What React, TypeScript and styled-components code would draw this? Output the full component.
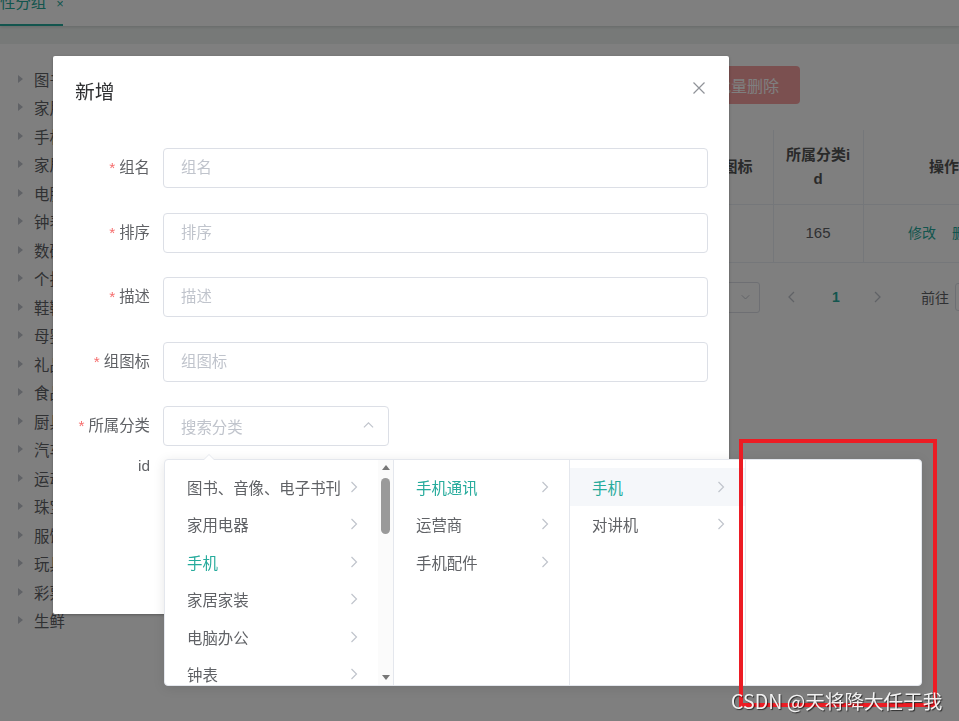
import React from "react";
import styled, { createGlobalStyle } from "styled-components";

const TEAL = "#26ab9c";
const FONT = `"Liberation Sans", "Noto Sans CJK SC", sans-serif`;

const GlobalStyle = createGlobalStyle`
  html, body {
    margin: 0;
    padding: 0;
    width: 959px;
    height: 721px;
    overflow: hidden;
    background: #fff;
    font-family: ${FONT};
  }
  * {
    box-sizing: border-box;
  }
`;

const Page = styled.div`
  width: 959px;
  height: 721px;
  overflow: hidden;
  display: flex;
  flex-direction: column;
  background: #fff;
`;

const TabBar = styled.div`
  height: 26px;
  flex-shrink: 0;
  display: flex;
  background: #fff;
  box-shadow: 0 1px 3px rgba(0, 0, 0, 0.14);
  position: relative;
  z-index: 1;
`;

const Tab = styled.div`
  width: 63px;
  height: 26px;
  border-bottom: 2px solid ${TEAL};
  color: ${TEAL};
  font-size: 15.4px;
  line-height: 16px;
  display: flex;
  align-items: flex-start;
  gap: 10px;
  overflow: hidden;
  white-space: nowrap;

  span {
    margin-top: -5px;
  }
`;

const TabClose = styled.span`
  font-size: 13px;
  margin-top: -4px !important;
`;

const Band = styled.div`
  height: 18px;
  flex-shrink: 0;
  background: #eef3f1;
`;

const Content = styled.div`
  flex: 1;
  display: flex;
  background: #fff;
`;

const Sidebar = styled.div`
  width: 240px;
  flex-shrink: 0;
  padding-top: 20.5px;
`;

const TreeNode = styled.div`
  height: 28.5px;
  display: flex;
  align-items: center;
  padding-left: 18px;
  font-size: 15.4px;
  color: #606266;
  white-space: nowrap;
`;

const Caret = styled.i`
  width: 0;
  height: 0;
  border-top: 4px solid transparent;
  border-bottom: 4px solid transparent;
  border-left: 5px solid #c0c4cc;
  margin-right: 11px;
`;

const Main = styled.div`
  width: 785px;
  flex-shrink: 0;
  padding-top: 22px;
`;

const Toolbar = styled.div`
  width: 560px;
  height: 38px;
  display: flex;
  justify-content: flex-end;
  gap: 10px;
  margin-bottom: 26px;
`;

const SearchBox = styled.div`
  width: 220px;
  height: 38px;
  border: 1px solid #dcdfe6;
  border-radius: 4px;
`;

const Button = styled.div<{ $kind?: "primary" | "danger" }>`
  height: 38px;
  padding: 0 21px;
  border-radius: 4px;
  display: flex;
  align-items: center;
  font-size: 16px;
  color: #fff;
  background: ${(p) => (p.$kind === "danger" ? "#f7a1a1" : TEAL)};
`;

const Table = styled.table`
  border-collapse: collapse;
  table-layout: fixed;
  width: 785px;
  font-size: 15px;
  color: #606266;

  th,
  td {
    border-bottom: 1px solid #ebeef5;
    border-right: 1px solid #ebeef5;
    text-align: center;
    line-height: 24px;
    padding: 0 12px;
    word-break: break-all;
  }

  th {
    height: 74px;
    font-weight: bold;
    color: #555;
  }

  td {
    height: 58px;
  }
`;

const LinkBtn = styled.span`
  color: ${TEAL};
  font-size: 14px;
  margin: 0 8px;
`;

const Pagination = styled.div`
  margin-top: 19px;
  margin-left: 364px;
  height: 31px;
  display: flex;
  align-items: center;
  font-size: 14px;
  color: #606266;
`;

const Total = styled.span`
  width: 46px;
  margin-right: 10px;
  white-space: nowrap;
`;

const SizeSelect = styled.div`
  width: 100px;
  height: 31px;
  border: 1px solid #dcdfe6;
  border-radius: 3px;
  display: flex;
  align-items: center;
  justify-content: space-between;
  padding: 0 9px 0 10px;
  margin-right: 18px;
  white-space: nowrap;
`;

const PageBtn = styled.div<{ $active?: boolean }>`
  width: ${(p) => (p.$active ? 36 : 30)}px;
  height: 28px;
  display: flex;
  align-items: center;
  justify-content: center;
  font-weight: bold;
  color: ${(p) => (p.$active ? TEAL : "#c0c4cc")};
`;

const JumpInput = styled.div`
  width: 50px;
  height: 28px;
  border: 1px solid #dcdfe6;
  border-radius: 3px;
  margin-left: 6px;
`;

const Mask = styled.div`
  position: fixed;
  inset: 0;
  z-index: 10;
  background: rgba(0, 0, 0, 0.5);
`;

const Dialog = styled.div`
  position: absolute;
  z-index: 11;
  left: 53px;
  top: 56px;
  width: 676px;
  height: 558px;
  background: #fff;
  border-radius: 2px;
  box-shadow: 0 1px 3px rgba(0, 0, 0, 0.3);
  display: flex;
  flex-direction: column;
`;

const DialogHeader = styled.div`
  padding: 23px 20px 10px 22px;
  position: relative;
`;

const DialogTitle = styled.span`
  font-size: 19.8px;
  line-height: 26px;
  color: #303133;
`;

const CloseBtn = styled.svg`
  position: absolute;
  right: 24px;
  top: 26px;
`;

const DialogBody = styled.div`
  padding: 33px 21px 0 20px;
`;

const FormItem = styled.div`
  display: flex;
  margin-bottom: 24.5px;
`;

const Label = styled.label`
  width: 90px;
  flex-shrink: 0;
  padding-right: 13px;
  text-align: right;
  line-height: 40px;
  font-size: 15.4px;
  color: #606266;
  white-space: nowrap;
`;

const Star = styled.span`
  color: #f56c6c;
  margin-right: 4px;
`;

const Input = styled.input`
  flex: 1;
  height: 40px;
  border: 1px solid #dcdfe6;
  border-radius: 4px;
  padding: 0 17px;
  font-family: ${FONT};
  font-size: 15.4px;
  color: #606266;
  outline: none;

  &::placeholder {
    color: #c0c4cc;
  }
`;

const CascaderBox = styled.div`
  width: 226px;
  height: 40px;
  border: 1px solid #dcdfe6;
  border-radius: 4px;
  padding: 0 14px 0 17px;
  display: flex;
  align-items: center;
  justify-content: space-between;
  font-size: 15.4px;
  color: #c0c4cc;
`;

const DialogFooter = styled.div`
  margin-top: auto;
  padding: 10px 20px 20px;
  display: flex;
  justify-content: flex-end;
  gap: 12px;
`;

const Dropdown = styled.div`
  position: absolute;
  z-index: 12;
  left: 164px;
  top: 459px;
  width: 758px;
  height: 227px;
  background: #fff;
  border: 1px solid #e4e7ed;
  border-radius: 4px;
  box-shadow: 0 2px 12px rgba(0, 0, 0, 0.1);
  display: flex;
`;

const PopperArrow = styled.div`
  position: absolute;
  top: -6px;
  left: 38px;
  width: 0;
  height: 0;
  border-left: 6px solid transparent;
  border-right: 6px solid transparent;
  border-bottom: 6px solid #e4e7ed;

  &::after {
    content: "";
    position: absolute;
    left: -5px;
    top: 1px;
    border-left: 5px solid transparent;
    border-right: 5px solid transparent;
    border-bottom: 5px solid #fff;
  }
`;

const Menu = styled.div<{ $width: number; $last?: boolean; $scroll?: boolean }>`
  width: ${(p) => p.$width}px;
  flex-shrink: 0;
  height: 100%;
  position: relative;
  overflow: hidden;
  border-right: ${(p) => (p.$last ? "none" : "1px solid #e4e7ed")};
  padding: 8px ${(p) => (p.$scroll ? 15 : 0)}px 0 0;
`;

const Node = styled.div<{ $active?: boolean; $hover?: boolean }>`
  height: 37.5px;
  display: flex;
  align-items: center;
  justify-content: space-between;
  padding: 0 20px 0 22px;
  font-size: 15.4px;
  white-space: nowrap;
  color: ${(p) => (p.$active ? TEAL : "#606266")};
  background: ${(p) => (p.$hover ? "#f5f7fa" : "transparent")};
`;

const Scrollbar = styled.div`
  position: absolute;
  top: 0;
  right: 0;
  bottom: 0;
  width: 15px;
  background: #fbfbfb;
  display: flex;
  flex-direction: column;
  align-items: center;
  padding: 5px 0;
`;

const ScrollArrow = styled.i<{ $down?: boolean }>`
  width: 0;
  height: 0;
  border-left: 4px solid transparent;
  border-right: 4px solid transparent;
  ${(p) =>
    p.$down
      ? "border-top: 5px solid #777; margin-top: auto;"
      : "border-bottom: 5px solid #777;"}
`;

const Thumb = styled.div`
  width: 9px;
  height: 56px;
  margin-top: 8px;
  border-radius: 5px;
  background: #9a9a9a;
`;

const Watermark = styled.div`
  position: absolute;
  z-index: 13;
  left: 731px;
  top: 688px;
  font-family: "Noto Sans CJK SC", sans-serif;
  font-size: 19.6px;
  line-height: 26px;
  color: rgba(255, 255, 255, 0.92);
  text-shadow: 1px 1px 1px rgba(0, 0, 0, 0.65);
  white-space: nowrap;
`;

const RedFrame = styled.div`
  position: absolute;
  z-index: 13;
  left: 739px;
  top: 439px;
  width: 198px;
  height: 268px;
  border: 4px solid #ec1c24;
`;

function ChevronRight() {
  return (
    <svg width="8" height="12" viewBox="0 0 8 12">
      <path d="M1.5 1 L6.5 6 L1.5 11" fill="none" stroke="#c0c4cc" strokeWidth="1.2" />
    </svg>
  );
}

function Chevron({ dir, size = 10 }: { dir: "up" | "down" | "left" | "right"; size?: number }) {
  const d = {
    up: "M1 7 L6 2 L11 7",
    down: "M1 3 L6 8 L11 3",
    left: "M7 1 L2 6 L7 11",
    right: "M3 1 L8 6 L3 11",
  }[dir];
  return (
    <svg width={size} height={size} viewBox="0 0 12 12">
      <path d={d} fill="none" stroke="#c0c4cc" strokeWidth="1.3" />
    </svg>
  );
}

const treeItems = [
  "图书、音像、电子书刊",
  "家用电器",
  "手机",
  "家居家装",
  "电脑办公",
  "钟表",
  "数码",
  "个护化妆",
  "鞋靴",
  "母婴",
  "礼品箱包",
  "食品饮料",
  "厨具",
  "汽车用品",
  "运动健康",
  "珠宝",
  "服饰内衣",
  "玩具乐器",
  "彩票、旅行",
  "生鲜",
];

const level1 = ["图书、音像、电子书刊", "家用电器", "手机", "家居家装", "电脑办公", "钟表", "数码"];
const level2 = ["手机通讯", "运营商", "手机配件"];
const level3 = ["手机", "对讲机"];

const fields = ["组名", "排序", "描述", "组图标"];

export default function App() {
  return (
    <>
      <GlobalStyle />
      <Page>
        <TabBar>
          <Tab>
            <span>性分组</span>
            <TabClose>×</TabClose>
          </Tab>
        </TabBar>
        <Band />
        <Content>
          <Sidebar>
            {treeItems.map((t) => (
              <TreeNode key={t}>
                <Caret />
                {t}
              </TreeNode>
            ))}
          </Sidebar>
          <Main>
            <Toolbar>
              <SearchBox />
              <Button>查询</Button>
              <Button>新增</Button>
              <Button $kind="danger">批量删除</Button>
            </Toolbar>
            <Table>
              <colgroup>
                <col style={{ width: 50 }} />
                <col style={{ width: 80 }} />
                <col style={{ width: 100 }} />
                <col style={{ width: 80 }} />
                <col style={{ width: 137 }} />
                <col style={{ width: 86 }} />
                <col style={{ width: 90 }} />
                <col style={{ width: 162 }} />
              </colgroup>
              <thead>
                <tr>
                  <th />
                  <th>分组id</th>
                  <th>组名</th>
                  <th>排序</th>
                  <th>描述</th>
                  <th>组图标</th>
                  <th>所属分类id</th>
                  <th>操作</th>
                </tr>
              </thead>
              <tbody>
                <tr>
                  <td />
                  <td>1</td>
                  <td>主体</td>
                  <td>0</td>
                  <td>主体</td>
                  <td />
                  <td>165</td>
                  <td>
                    <LinkBtn>修改</LinkBtn>
                    <LinkBtn>删除</LinkBtn>
                  </td>
                </tr>
              </tbody>
            </Table>
            <Pagination>
              <Total>共 1 条</Total>
              <SizeSelect>
                10条/页
                <Chevron dir="down" size={9} />
              </SizeSelect>
              <PageBtn>
                <Chevron dir="left" size={12} />
              </PageBtn>
              <PageBtn $active style={{ margin: "0 9px 0 10px" }}>
                1
              </PageBtn>
              <PageBtn style={{ marginRight: 28 }}>
                <Chevron dir="right" size={12} />
              </PageBtn>
              前往
              <JumpInput />
            </Pagination>
          </Main>
        </Content>
      </Page>

      <Mask />

      <Dialog>
        <DialogHeader>
          <DialogTitle>新增</DialogTitle>
          <CloseBtn width="12" height="12" viewBox="0 0 12 12">
            <path d="M0.5 0.5 L11.5 11.5 M11.5 0.5 L0.5 11.5" stroke="#909399" strokeWidth="1.2" />
          </CloseBtn>
        </DialogHeader>
        <DialogBody>
          {fields.map((f) => (
            <FormItem key={f}>
              <Label>
                <Star>*</Star>
                {f}
              </Label>
              <Input placeholder={f} readOnly />
            </FormItem>
          ))}
          <FormItem>
            <Label>
              <Star>*</Star>
              所属分类
              <br />
              id
            </Label>
            <CascaderBox>
              搜索分类
              <Chevron dir="up" size={11} />
            </CascaderBox>
          </FormItem>
        </DialogBody>
        <DialogFooter>
          <Button>取 消</Button>
          <Button>确 定</Button>
        </DialogFooter>
      </Dialog>

      <Dropdown>
        <PopperArrow />
        <Menu $width={229} $scroll>
          {level1.map((t) => (
            <Node key={t} $active={t === "手机"}>
              {t}
              <ChevronRight />
            </Node>
          ))}
          <Scrollbar>
            <ScrollArrow />
            <Thumb />
            <ScrollArrow $down />
          </Scrollbar>
        </Menu>
        <Menu $width={176}>
          {level2.map((t, i) => (
            <Node key={t} $active={i === 0}>
              {t}
              <ChevronRight />
            </Node>
          ))}
        </Menu>
        <Menu $width={176}>
          {level3.map((t, i) => (
            <Node key={t} $active={i === 0} $hover={i === 0}>
              {t}
              <ChevronRight />
            </Node>
          ))}
        </Menu>
        <Menu $width={176} $last />
      </Dropdown>

      <RedFrame />
      <Watermark>CSDN @天将降大任于我</Watermark>
    </>
  );
}
